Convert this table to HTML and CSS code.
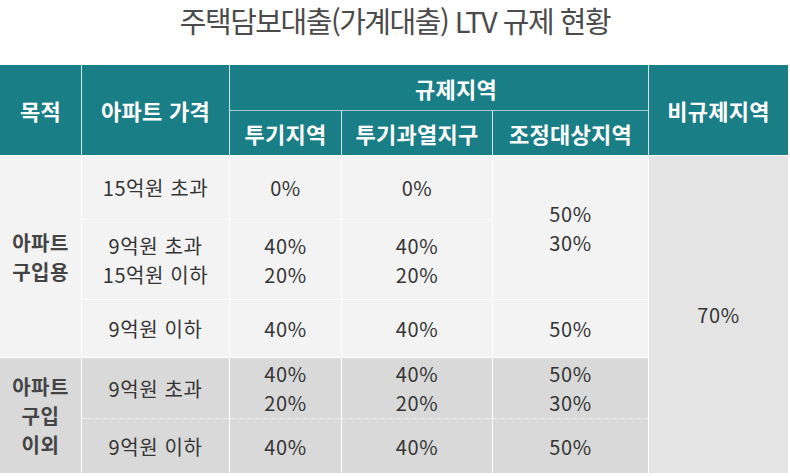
FILE: index.html
```
<!DOCTYPE html>
<html lang="ko">
<head>
<meta charset="utf-8">
<title>LTV 규제 현황</title>
<link rel="stylesheet" href="styles.css">
</head>
<body>
<h1 class="title">주택담보대출(가계대출) LTV 규제 현황</h1>
<table class="ltv">
  <colgroup>
    <col class="c1"><col class="c2"><col class="c3"><col class="c4"><col class="c5"><col class="c6">
  </colgroup>
  <thead>
    <tr class="hr1">
      <th rowspan="2" class="first">목적</th>
      <th rowspan="2">아파트 가격</th>
      <th colspan="3" class="reg">규제지역</th>
      <th rowspan="2">비규제지역</th>
    </tr>
    <tr class="hr2">
      <th>투기지역</th>
      <th>투기과열지구</th>
      <th>조정대상지역</th>
    </tr>
  </thead>
  <tbody>
    <tr class="r1 g1">
      <th rowspan="3" class="first purpose">아파트<br>구입용</th>
      <td>15억원 초과</td>
      <td>0%</td>
      <td>0%</td>
      <td rowspan="2">50%<br>30%</td>
      <td rowspan="5" class="free">70%</td>
    </tr>
    <tr class="r2 g1 dotted">
      <td>9억원 초과<br>15억원 이하</td>
      <td>40%<br>20%</td>
      <td>40%<br>20%</td>
    </tr>
    <tr class="r3 g1">
      <td>9억원 이하</td>
      <td>40%</td>
      <td>40%</td>
      <td>50%</td>
    </tr>
    <tr class="r4 g2">
      <th rowspan="2" class="first purpose">아파트<br>구입<br>이외</th>
      <td>9억원 초과</td>
      <td>40%<br>20%</td>
      <td>40%<br>20%</td>
      <td>50%<br>30%</td>
    </tr>
    <tr class="r5 g2 dotted">
      <td>9억원 이하</td>
      <td>40%</td>
      <td>40%</td>
      <td>50%</td>
    </tr>
  </tbody>
</table>
</body>
</html>
```
FILE: styles.css
```
html, body {
  margin: 0;
  padding: 0;
  background: #ffffff;
}
body {
  width: 790px;
  height: 476px;
  overflow: hidden;
  font-family: "Noto Sans CJK KR", "Noto Sans", sans-serif;
}
.title {
  margin: 0;
  height: 65px;
  padding-top: 1px;
  box-sizing: border-box;
  line-height: 38px;
  text-align: center;
  font-size: 29px;
  font-weight: 400;
  letter-spacing: -1.5px;
  color: #4b4b4b;
}
.ltv {
  width: 788px;
  table-layout: fixed;
  border-collapse: separate;
  border-spacing: 0;
}
.c1 { width: 81px; }
.c2 { width: 148px; }
.c3 { width: 112px; }
.c4 { width: 151px; }
.c5 { width: 156px; }
.c6 { width: 140px; }

.ltv th, .ltv td {
  padding: 0;
  border: 0;
  border-top: 1px solid #ffffff;
  border-left: 1px solid #ffffff;
  text-align: center;
  vertical-align: middle;
}
.ltv .first { border-left: 0; }

.ltv thead th {
  background: #1a7e87;
  color: #ffffff;
  font-size: 22px;
  font-weight: 700;
  letter-spacing: 0.3px;
  border-left-color: rgba(255, 255, 255, 0.8);
  border-top-color: rgba(255, 255, 255, 0.6);
}
.ltv .hr1 th { border-top: 0; }
.ltv .hr1 { height: 45px; }
.ltv .hr2 { height: 45px; }
.ltv .reg { padding-left: 34px; }

.ltv tbody td {
  font-size: 20px;
  line-height: 29px;
  color: #353535;
  letter-spacing: 0.6px;
}
.ltv .purpose {
  font-size: 20px;
  line-height: 29px;
  font-weight: 700;
  color: #444444;
  letter-spacing: 0.5px;
}
.ltv .g1 td, .ltv .g1 th { background: #f2f3f2; }
.ltv .g2 td, .ltv .g2 th { background: #d9d9d9; }
.ltv .g1 td.free { background: #e4e4e4; }
.ltv .dotted td { border-top-style: dotted; }

.ltv .r1 { height: 64px; }
.ltv .r2 { height: 80px; }
.ltv .r3 { height: 58px; }
.ltv .r4 { height: 61px; }
.ltv .r5 { height: 55px; }
```
